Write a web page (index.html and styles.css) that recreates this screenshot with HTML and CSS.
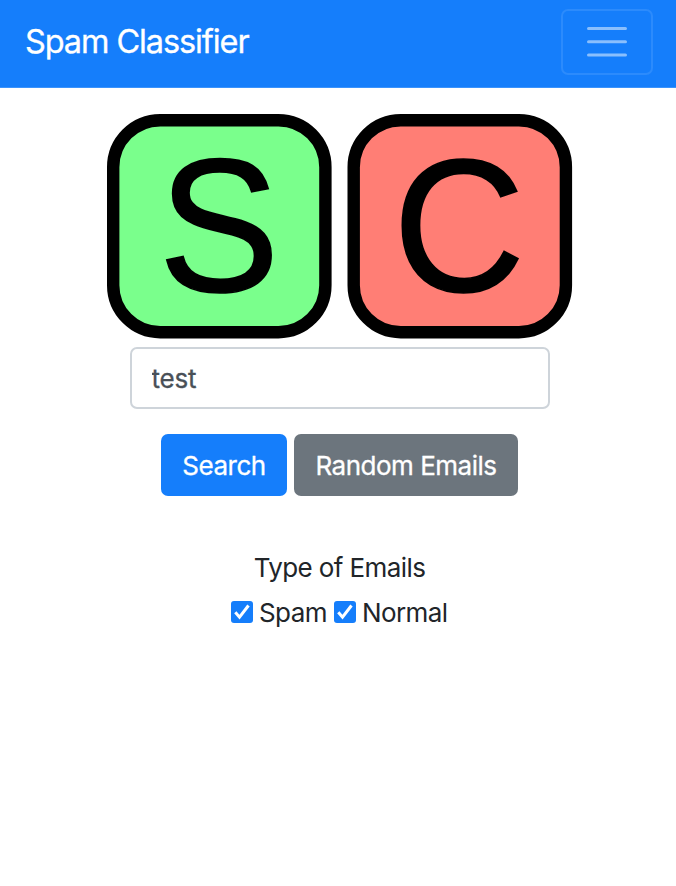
FILE: index.html
```html
<!DOCTYPE html>
<html lang="en">
<head>
<meta charset="utf-8">
<title>Spam Classifier</title>
<link rel="stylesheet" href="styles.css">
</head>
<body>
<nav class="navbar">
  <a class="brand">Spam Classifier</a>
  <button class="toggler" aria-label="Toggle navigation">
    <svg width="40" height="40" viewBox="0 0 40 40"><path d="M1.5 6.5h37M1.5 19.8h37M1.5 33h37"/></svg>
  </button>
</nav>
<main class="content">
  <svg class="logo" width="466" height="225" viewBox="0 0 466 225">
    <rect class="tile spam" x="6.2" y="6.2" width="212.2" height="212" rx="47"/>
    <rect class="tile ham" x="246.7" y="6.2" width="212.2" height="212" rx="47"/>
    <text class="letter" x="51.5" y="177.3" textLength="121" lengthAdjust="spacingAndGlyphs">S</text>
    <text class="letter" x="286" y="177.3" textLength="132" lengthAdjust="spacingAndGlyphs">C</text>
  </svg>
  <input class="query" type="text" value="test" aria-label="Search emails">
  <div class="actions">
    <button class="btn primary">Search</button>
    <button class="btn secondary">Random Emails</button>
  </div>
  <div class="title">Type of Emails</div>
  <div class="options">
    <svg class="check" width="22" height="22" viewBox="0 0 22 22"><rect width="22" height="22" rx="3"/><path d="M4.3 11.3l4.2 4.9L17.5 4.5"/></svg>
    <span class="option spam-label">Spam</span>
    <svg class="check" width="22" height="22" viewBox="0 0 22 22"><rect width="22" height="22" rx="3"/><path d="M4.3 11.3l4.2 4.9L17.5 4.5"/></svg>
    <span class="option normal-label">Normal</span>
  </div>
</main>
</body>
</html>
```
FILE: styles.css
```css
* { box-sizing: border-box; }
body { margin: 0; background: #fff; color: #212529; font: 26px/40px Inter, "Liberation Sans", sans-serif; letter-spacing: -0.6px; }
svg { display: block; overflow: visible; }
.navbar { height: 88px; padding: 9px 23px 0 25px; display: flex; justify-content: space-between; align-items: flex-start; background: #157efb; border-bottom: 1px solid #3b93fc; color: #fff; }
.brand { font-size: 32.5px; letter-spacing: -1.1px; margin-top: 13px; -webkit-text-stroke: 0.3px; }
.toggler { width: 92px; height: 66px; padding: 0; border: 2px solid #2c8bfc; border-radius: 7px; background: transparent; display: flex; justify-content: center; align-items: center; }
.toggler path { stroke: #8abffd; stroke-width: 3; stroke-linecap: round; }
.content { padding-top: 26px; padding-left: 3px; display: flex; flex-direction: column; align-items: center; }
.tile { stroke: #000; stroke-width: 12.4; }
.spam { fill: #7aff8c; }
.ham { fill: #ff7e75; }
.letter { font: 189px "Liberation Sans", Arial, sans-serif; fill: #000; stroke: #000; stroke-width: 1.6; letter-spacing: 0; }
.query { width: 420px; height: 62px; margin-top: 8px; padding: 0 20px; border: 2px solid #ced4da; border-radius: 7px; color: #495057; font: inherit; letter-spacing: -0.2px; background: #fff; -webkit-text-stroke: 0.3px; }
.actions { margin-top: 25px; display: flex; gap: 7px; }
.btn { height: 62px; border: 0; border-radius: 7px; padding: 2px 0 0; color: #fff; font: inherit; letter-spacing: -0.5px; -webkit-text-stroke: 0.3px; }
.primary { width: 126px; background: #157efb; }
.secondary { width: 224px; background: #6c757d; }
.title { margin-top: 52px; }
.options { margin-top: 5px; display: flex; align-items: center; }
.check { margin-top: -3px; }
.check rect { fill: #157efb; }
.check path { fill: none; stroke: #fff; stroke-width: 3; }
.option { margin-left: 6px; white-space: nowrap; }
.spam-label { width: 75px; }
.normal-label { width: 86px; }
```
